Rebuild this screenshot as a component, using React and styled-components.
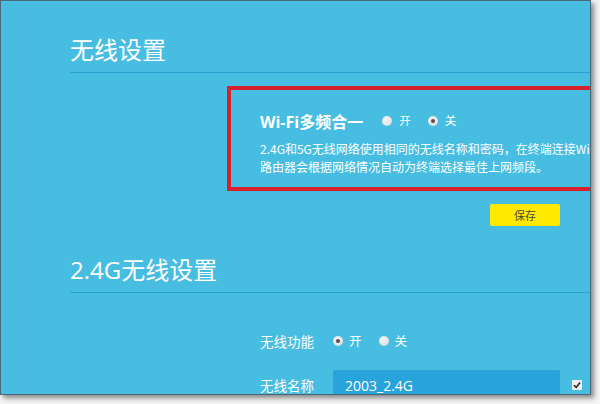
import React from 'react';
import styled, { createGlobalStyle } from 'styled-components';

const GlobalStyle = createGlobalStyle`
	html, body {
		margin: 0;
		padding: 0;
		background: #ffffff;
	}
	body {
		width: 600px;
		height: 404px;
		overflow: hidden;
		font-family: "Open Sans", "Noto Sans CJK SC", sans-serif;
	}
`;

const Shot = styled.div`
	width: 600px;
	height: 404px;
	background: #f4f4f4;
`;

const Window = styled.div`
	width: 520px;
	height: 393px;
	border: 1px solid #4b6878;
	background: #47bde2;
	box-shadow: 3px 3px 5px rgba(0, 0, 0, 0.45);
	overflow: hidden;
	color: #ffffff;
	padding-left: 69px;
`;

const Title = styled.h2`
	margin: ${(p) => p.$top}px 0 0;
	padding-bottom: 6px;
	font-size: 24px;
	line-height: 32px;
	font-weight: 400;
	font-family: "Open Sans", "Noto Sans CJK SC", sans-serif;
	border-bottom: 1px solid #2ba2d3;
	white-space: nowrap;
`;

const Notice = styled.div`
	margin: 13px 0 0 157px;
	width: 420px;
	border: 4px solid #d9212c;
	padding: 22px 0 11px 29px;
`;

const OptionRow = styled.div`
	display: flex;
	align-items: center;
	height: 18px;
`;

const NoticeTitle = styled.span`
	font-size: 16px;
	font-weight: 700;
	margin-right: 19px;
	white-space: nowrap;
`;

const Desc = styled.p`
	margin: 10px 0 0;
	font-size: 12px;
	line-height: 18px;
	white-space: nowrap;
	font-family: "Noto Sans CJK SC", sans-serif;
`;

const Choice = styled.label`
	display: flex;
	align-items: center;
	gap: ${(p) => p.$gap}px;
	margin-right: ${(p) => p.$space}px;
	font-size: ${(p) => p.$size}px;
	font-family: "Noto Sans CJK SC", sans-serif;
	line-height: 1;
`;

const Radio = styled.span`
	width: 10px;
	height: 10px;
	border-radius: 50%;
	background: radial-gradient(circle at 40% 35%, #f4f4f4, #d8dadc);
	display: flex;
	align-items: center;
	justify-content: center;

	&::after {
		content: '';
		width: 4px;
		height: 4px;
		border-radius: 50%;
		background: ${(p) => (p.$checked ? '#5a4a4a' : 'transparent')};
	}
`;

const Actions = styled.div`
	display: flex;
	padding-left: 420px;
	margin-top: 13px;
`;

const SaveButton = styled.button`
	width: 70px;
	height: 22px;
	border: none;
	border-radius: 2px;
	background: #ffe900;
	color: #4a4a3a;
	font-size: 11px;
	font-family: "Noto Sans CJK SC", sans-serif;
	padding: 0;
`;

const FormRow = styled.div`
	display: flex;
	align-items: center;
	margin: ${(p) => p.$top}px 0 0 190px;
	height: ${(p) => p.$h}px;
`;

const Label = styled.span`
	width: 73px;
	flex-shrink: 0;
	font-size: 13.5px;
	font-family: "Noto Sans CJK SC", sans-serif;
	white-space: nowrap;
`;

const Input = styled.div`
	width: 215px;
	height: 30px;
	padding-left: 12px;
	background: #28a3dc;
	border-radius: 2px;
	display: flex;
	align-items: center;
	font-size: 14px;
	font-family: "Open Sans", sans-serif;
	flex-shrink: 0;
`;

const Check = styled.span`
	margin-left: 12px;
	width: 10px;
	height: 10px;
	background: #f0f0f0;
	border-radius: 1px;
	display: flex;
	align-items: center;
	justify-content: center;
	flex-shrink: 0;
`;

export default function App() {
	return (
		<>
			<GlobalStyle />
			<Shot>
				<Window>
					<Title $top={33}>无线设置</Title>
					<Notice>
						<OptionRow>
							<NoticeTitle>Wi-Fi多频合一</NoticeTitle>
							<Choice $gap={7} $space={17} $size={11.5}>
								<Radio />开
							</Choice>
							<Choice $gap={7} $space={0} $size={11.5}>
								<Radio $checked />关
							</Choice>
						</OptionRow>
						<Desc>
							2.4G和5G无线网络使用相同的无线名称和密码，在终端连接Wi-Fi时，
							<br />
							路由器会根据网络情况自动为终端选择最佳上网频段。
						</Desc>
					</Notice>
					<Actions>
						<SaveButton>保存</SaveButton>
					</Actions>
					<Title $top={28}>2.4G无线设置</Title>
					<FormRow $top={38} $h={20}>
						<Label>无线功能</Label>
						<Choice $gap={6} $space={17} $size={12.5}>
							<Radio $checked />开
						</Choice>
						<Choice $gap={6} $space={0} $size={12.5}>
							<Radio />关
						</Choice>
					</FormRow>
					<FormRow $top={19} $h={30}>
						<Label>无线名称</Label>
						<Input>2003_2.4G</Input>
						<Check>
							<svg width="8" height="8" viewBox="0 0 8 8">
								<path d="M1 4.2 L3.2 6.4 L7 1.6" fill="none" stroke="#222" strokeWidth="1.6" />
							</svg>
						</Check>
					</FormRow>
				</Window>
			</Shot>
		</>
	);
}
